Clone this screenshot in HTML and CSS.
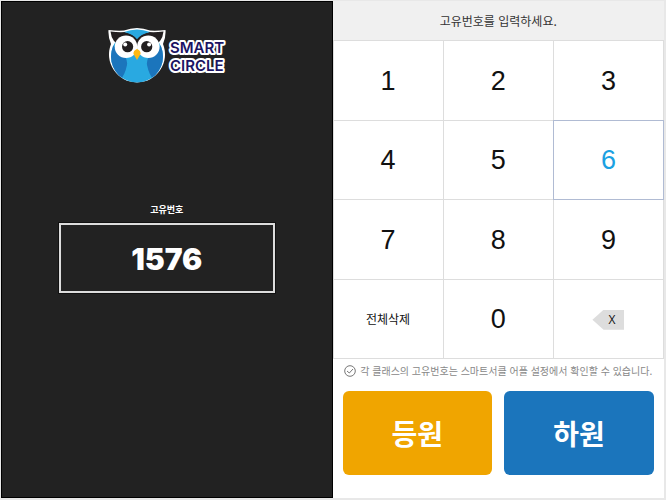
FILE: index.html
```html
<!DOCTYPE html>
<html lang="ko">
  <head>
    <meta charset="UTF-8" />
    <meta name="viewport" content="width=device-width, initial-scale=1.0" />
    <title>SMART CIRCLE</title>
    <link rel="stylesheet" href="styles.css">
  </head>
  <body>
    <main class="kiosk">
      <section class="display">
        <svg class="logo" viewBox="0 0 120 58" role="img" aria-label="SMART CIRCLE">
          <defs>
            <clipPath id="body-clip"><circle cx="30" cy="29.500" r="26" /></clipPath>
          </defs>
          <!-- owl -->
          <path d="M1.500 3 Q10 4 17 3.500 Q30 -1.500 43 3.500 Q50 4 58.500 3 Q59 10 56 17 A28 28 0 1 1 4 17 Q1 10 1.500 3 Z" fill="#fff" />
          <g clip-path="url(#body-clip)">
            <rect x="2" y="1" width="56" height="56" fill="#29a9e1" />
            <path d="M2 14 L14 26 Q21 31 20 38 Q18 48 13 53 L2 57 Z" fill="#1b75bc" />
            <path d="M58 14 L46 26 Q39 31 40 38 Q42 48 47 53 L58 57 Z" fill="#1b75bc" />
          </g>
          <path d="M3.500 4.500 Q12 5.500 18 5 Q27 7 30 12 Q33 7 42 5 Q48 5.500 56.500 4.500 Q56 10 53 14 L46 20 L14 20 L7 14 Q4 10 3.500 4.500 Z" fill="#231f20" />
          <path d="M17 5 Q30 0 43 5 Q34 7 30 12 Q26 7 17 5 Z" fill="#29a9e1" />
          <circle cx="19" cy="19.700" r="11.300" fill="#fff" />
          <circle cx="41.300" cy="19.700" r="11.300" fill="#fff" />
          <circle cx="20.600" cy="19.700" r="5.600" fill="#231f20" />
          <circle cx="39.700" cy="19.700" r="5.600" fill="#231f20" />
          <circle cx="18.200" cy="17.500" r="2" fill="#fff" />
          <circle cx="42.100" cy="17.500" r="2" fill="#fff" />
          <path d="M30 22 Q34 23.500 33.500 27 L30 33 L26.500 27 Q26 23.500 30 22 Z" fill="#fdb913" />
          <!-- name -->
          <text class="logo-text" x="63" y="26">SMART</text>
          <text class="logo-text" x="63" y="44">CIRCLE</text>
        </svg>
        <div class="entry">
          <label class="entry-label" for="code">고유번호</label>
          <input class="entry-input" id="code" type="text" inputmode="numeric" value="1576" readonly>
        </div>
      </section>

      <section class="panel">
        <h1 class="panel-title">고유번호를 입력하세요.</h1>
        <div class="keypad">
          <button class="key" type="button">1</button>
          <button class="key" type="button">2</button>
          <button class="key" type="button">3</button>
          <button class="key" type="button">4</button>
          <button class="key" type="button">5</button>
          <button class="key key-active" type="button">6</button>
          <button class="key" type="button">7</button>
          <button class="key" type="button">8</button>
          <button class="key" type="button">9</button>
          <button class="key key-clear" type="button">전체삭제</button>
          <button class="key" type="button">0</button>
          <button class="key" type="button" aria-label="지우기"><span class="backspace">X</span></button>
        </div>
        <p class="notice">
          <svg class="check" viewBox="0 0 12 12" aria-hidden="true">
            <circle cx="6" cy="6" r="5.300" />
            <path d="M3 6 L5.300 8 L9 4" />
          </svg>
          각 클래스의 고유번호는 스마트서클 어플 설정에서 확인할 수 있습니다.
        </p>
        <div class="actions">
          <button class="action action-in" type="button">등원</button>
          <button class="action action-out" type="button">하원</button>
        </div>
      </section>
    </main>
  </body>
</html>
```
FILE: styles.css
```css
* {
  box-sizing: border-box;
}

body {
  margin: 0;
  background: #e8e8e8;
  font-family: "Noto Sans CJK KR", sans-serif;
  color: #333;
}

button,
input {
  font-family: inherit;
  margin: 0;
}

.kiosk {
  display: grid;
  grid-template-columns: 1fr 1fr;
  min-height: 100vh;
  padding: 1px 2px 2px 1px;
}

.display {
  display: flex;
  flex-direction: column;
  align-items: center;
  background: #222;
  border: 1px solid #000;
  padding: 25px 57px;
}

.logo {
  width: 120px;
  height: 58px;
}

.logo-text {
  font-family: Inter, sans-serif;
  font-size: 15px;
  font-weight: 600;
  fill: #1b1464;
  stroke: #fff;
  stroke-width: 4px;
  stroke-linejoin: round;
  paint-order: stroke;
}

.entry {
  display: flex;
  flex-direction: column;
  align-items: center;
  gap: 6px;
  width: 100%;
  margin-top: 118px;
}

.entry-label {
  font-size: 9px;
  font-weight: 700;
  line-height: 14px;
  color: #fff;
}

.entry-input {
  width: 100%;
  height: 70px;
  padding: 2px 0 0;
  background: #222;
  border: 2px solid #ddd;
  outline: 1px solid #111;
  font-family: Inter, sans-serif;
  font-size: 30px;
  font-weight: 900;
  text-align: center;
  color: #fff;
}

.panel {
  display: flex;
  flex-direction: column;
  background: #fff;
}

.panel-title {
  margin: 0;
  background: #f0f0f0;
  font-size: 12px;
  font-weight: 400;
  line-height: 39px;
  text-align: center;
}

.keypad {
  display: grid;
  grid-template-columns: repeat(3, 1fr);
  grid-template-rows: repeat(4, 1fr);
  gap: 1px;
  height: 319px;
  padding: 1px;
  background: #ddd;
}

.key {
  display: flex;
  align-items: center;
  justify-content: center;
  padding: 2px 0 0;
  background: #fff;
  border: 0;
  font-family: "Liberation Sans", "Noto Sans CJK KR", sans-serif;
  font-size: 27px;
  color: #111;
}

.key-active {
  outline: 1px solid #b0bbd3;
  color: #1ba1e2;
}

.key-clear {
  padding: 0;
  font-size: 12px;
}

.backspace {
  width: 32px;
  padding-left: 7px;
  background: #ddd;
  clip-path: polygon(0 50%, 35% 0, 100% 0, 100% 100%, 35% 100%);
  font-family: "Open Sans", sans-serif;
  font-size: 12px;
  line-height: 20px;
}

.notice {
  display: flex;
  align-items: center;
  justify-content: center;
  gap: 4px;
  margin: 0;
  font-size: 10px;
  line-height: 24px;
  white-space: nowrap;
  color: #888;
}

.check {
  width: 12px;
  height: 12px;
  fill: none;
  stroke: #777;
}

.actions {
  display: grid;
  grid-template-columns: 1fr 1fr;
  gap: 12px;
  padding: 8px 10px;
}

.action {
  height: 84px;
  padding: 0;
  border: 0;
  border-radius: 6px;
  font-size: 28px;
  font-weight: 700;
  color: #fff;
}

.action-in {
  background: #f0a500;
}

.action-out {
  background: #1b75bc;
}
```
